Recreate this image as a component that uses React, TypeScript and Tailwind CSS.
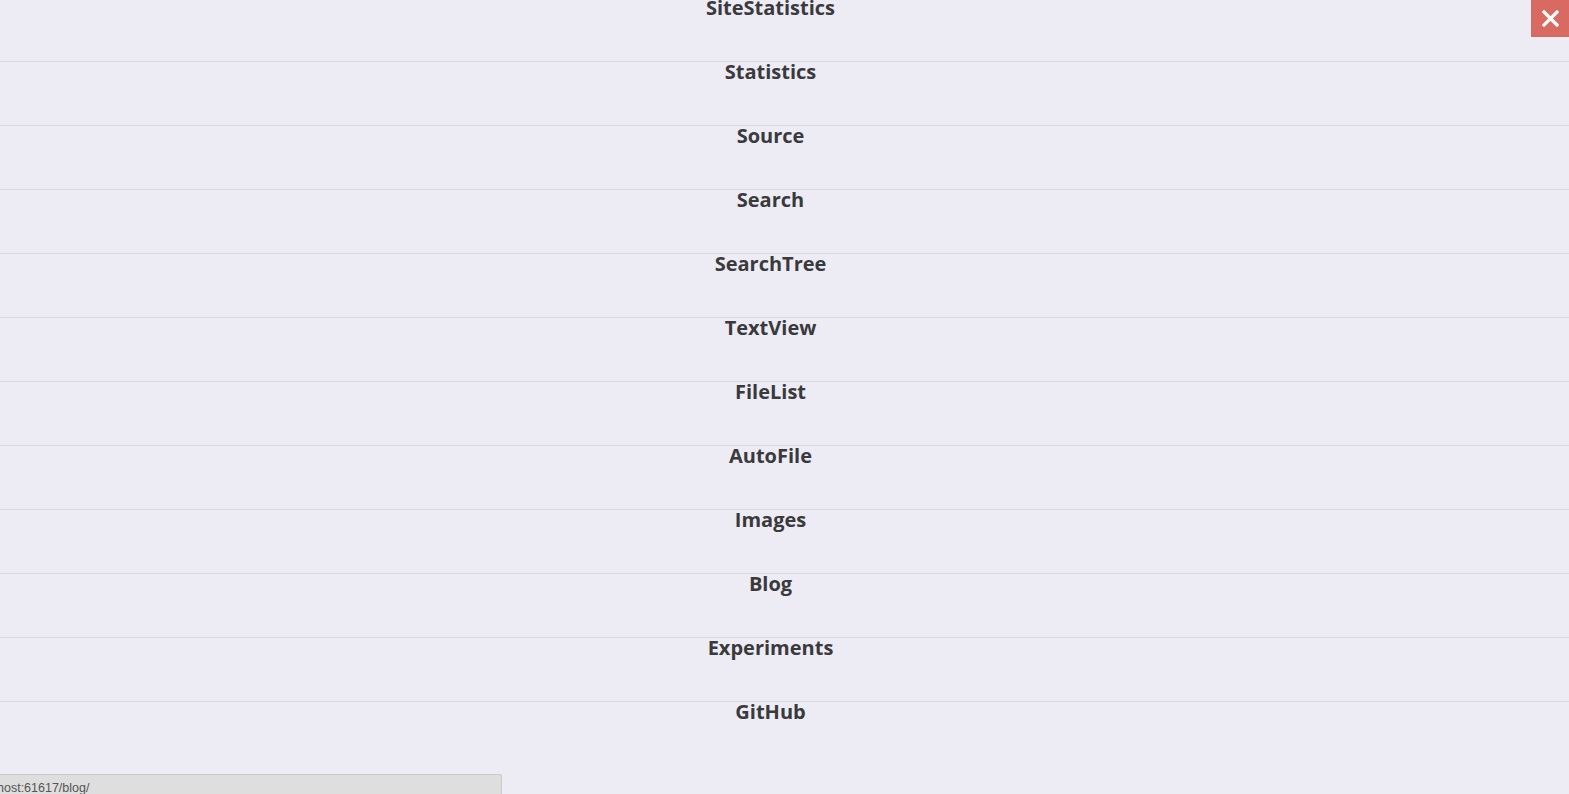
import * as React from 'react';

const items = [
  'SiteStatistics',
  'Statistics',
  'Source',
  'Search',
  'SearchTree',
  'TextView',
  'FileList',
  'AutoFile',
  'Images',
  'Blog',
  'Experiments',
  'GitHub',
];

export default function App() {
  return (
    <div className="relative h-[794px] w-full overflow-hidden bg-[#edecf5] font-['Open_Sans',sans-serif]">
      {/* Menu list */}
      <ul className="-mt-[2px]">
        {items.map((label, i) => (
          <li
            key={label}
            className={`h-16 pr-[28px] text-center text-[20px] leading-[20px] ${i < items.length - 1 ? 'border-b border-[#d9d7e2]' : ''}`}
          >
            <a className="font-bold text-[#3a3a3c]">{label}</a>
          </li>
        ))}
      </ul>

      {/* Close button */}
      <button className="absolute top-0 right-0 flex h-[37px] w-[38px] items-center justify-center bg-[#d96a62]">
        <svg width="17" height="17" viewBox="0 0 17 17">
          <path d="M2 2 L15 15 M15 2 L2 15" stroke="white" strokeWidth="3.2" strokeLinecap="square" />
        </svg>
      </button>

      {/* Status bar */}
      <div className="absolute bottom-0 left-0 flex h-[20px] w-[502px] items-center rounded-tr-[3px] border-t border-r border-[#c9c9c9] bg-[#dedede] pt-[6px] font-['Liberation_Sans',sans-serif] text-[12.5px] leading-[14px] text-[#555]">
        <span className="-ml-[3px]">host:61617/blog/</span>
      </div>
    </div>
  );
}
